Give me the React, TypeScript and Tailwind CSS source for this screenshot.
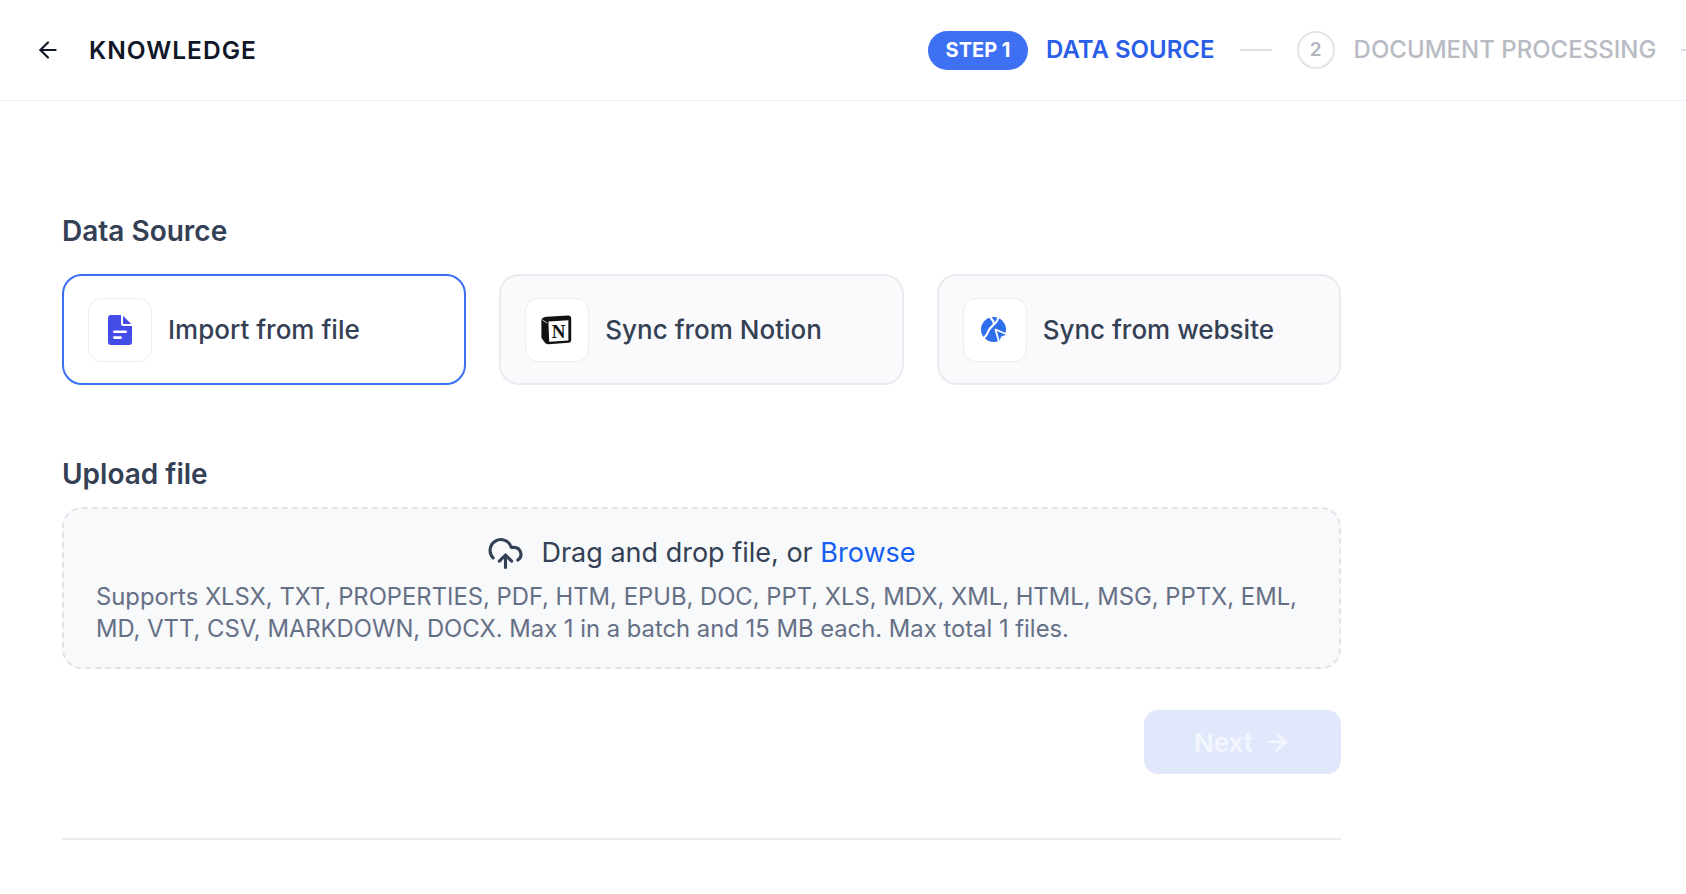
import React from "react";
import { ArrowLeft, ArrowRight, CloudUpload } from "lucide-react";

function FileIcon() {
  return (
    <svg width="24" height="30" viewBox="0 0 24 30" fill="none">
      <path
        d="M3 0 H13 V8.5 a2.5 2.5 0 0 0 2.5 2.5 H24 V27 a3 3 0 0 1 -3 3 H3 a3 3 0 0 1 -3 -3 V3 a3 3 0 0 1 3 -3 Z"
        fill="#444CE7"
      />
      <path d="M15 0.8 L23.2 9 H15 Z" fill="#444CE7" />
      <rect x="5" y="15.5" width="14" height="2.6" rx="1.3" fill="#fff" />
      <rect x="5" y="21.3" width="9" height="2.6" rx="1.3" fill="#fff" />
    </svg>
  );
}

function NotionIcon() {
  return (
    <svg width="32" height="30" viewBox="0 0 32 30" fill="none">
      <path
        d="M5.5 1.8 L27 0.4 C28.8 0.3 30.2 1.4 30.2 3.2 V25 C30.2 26.6 29.1 27.6 27.6 27.7 L7.2 29.2 C5.8 29.3 4.8 28.8 4 27.8 L1.2 24 C0.6 23.2 0.4 22.4 0.4 21.4 V5.8 C0.4 3.6 2 2 5.5 1.8 Z"
        fill="#111"
      />
      <path d="M7.4 6.6 L27.4 5.2 V25.4 L8.2 26.8 Z" fill="#fff" />
      <path d="M1.6 5 L6 8" stroke="#fff" strokeWidth="0.8" />
      <text
        x="17.6"
        y="23.4"
        textAnchor="middle"
        fontFamily="'Liberation Serif', serif"
        fontWeight="bold"
        fontSize="19"
        fill="#111"
      >
        N
      </text>
    </svg>
  );
}

function GlobeIcon() {
  return (
    <svg width="30" height="28" viewBox="0 0 30 28" fill="none">
      <circle cx="13.5" cy="13.5" r="12.5" fill="#2F6FEB" />
      <path
        d="M10.5 1.4 C11.8 4 15 5.2 13.6 8.4 C12.6 10.8 9.6 11.6 8.8 14.2 C8 16.8 6.2 19.6 4 22"
        stroke="#fff"
        strokeWidth="2.2"
        strokeLinecap="round"
      />
      <path d="M13.6 8.4 C15.6 7.8 17 5.2 18.4 1.8" stroke="#fff" strokeWidth="2" strokeLinecap="round" />
      <path
        d="M15.5 13.5 L28.5 19 L22 21 L19.5 27.5 Z"
        fill="#2F6FEB"
        stroke="#fff"
        strokeWidth="1.8"
        strokeLinejoin="round"
      />
    </svg>
  );
}

function SourceCard({
  icon,
  label,
  active,
}: {
  icon: React.ReactNode;
  label: string;
  active?: boolean;
}) {
  return (
    <div
      className={
        active
          ? "flex h-[111px] items-center gap-[16px] rounded-[20px] border-2 border-[#3D6FF3] bg-white px-[24px]"
          : "flex h-[111px] items-center gap-[16px] rounded-[20px] border-2 border-[#EAEBF0] bg-[#FAFAFC] px-[24px]"
      }
    >
      <div className="flex h-[64px] w-[64px] shrink-0 items-center justify-center rounded-[13px] border border-[#EDEDF0] bg-white">
        {icon}
      </div>
      <span className="text-[26px] font-medium leading-[32px] text-[#344054]">{label}</span>
    </div>
  );
}

export default function App() {
  return (
    <div
      className="min-h-[894px] w-full overflow-hidden bg-white"
      style={{ fontFamily: "Inter, 'Noto Sans', sans-serif" }}
    >
      {/* Header */}
      <header className="flex h-[101px] items-center overflow-hidden border-b border-[#F0F0F2]">
        <div className="flex w-[928px] shrink-0 items-center pl-[35px]">
          <ArrowLeft size={26} strokeWidth={2} className="text-[#101828]" />
          <span className="ml-[28px] text-[24.5px] font-semibold leading-[30px] tracking-[1px] text-[#101828]">
            KNOWLEDGE
          </span>
        </div>
        <div className="flex shrink-0 items-center">
          <div className="flex h-[39px] w-[100px] items-center justify-center rounded-full bg-[#3E70F4] text-[20px] font-bold text-white">
            STEP 1
          </div>
          <span className="ml-[18px] text-[24px] font-semibold text-[#2A5EE8]">DATA SOURCE</span>
          <div className="mx-[25px] h-[2px] w-[32px] bg-[#DCDEE3]" />
          <div className="flex h-[38px] w-[38px] items-center justify-center rounded-full border-2 border-[#E4E5E9] text-[19px] font-semibold text-[#B2B6BF]">
            2
          </div>
          <span className="ml-[19px] text-[24px] font-medium text-[#B8BBC3]">DOCUMENT PROCESSING</span>
          <div className="ml-[25px] h-[2px] w-[32px] bg-[#DCDEE3]" />
        </div>
      </header>

      {/* Content */}
      <main className="ml-[62px] w-[1279px] pt-[113px]">
        <h2 className="text-[28px] font-semibold leading-[34px] text-[#344054]">Data Source</h2>
        <div className="mt-[26px] grid grid-cols-3 gap-[33px]">
          <SourceCard icon={<FileIcon />} label="Import from file" active />
          <SourceCard icon={<NotionIcon />} label="Sync from Notion" />
          <SourceCard icon={<GlobeIcon />} label="Sync from website" />
        </div>

        <h2 className="mt-[72px] text-[28px] font-semibold leading-[34px] text-[#344054]">Upload file</h2>
        <div className="mt-[16px] rounded-[20px] border-2 border-dashed border-[#E1E3E8] bg-[#F8F9FB] px-[32px] pb-[22px] pt-[26px]">
          <div className="flex h-[36px] items-center justify-center gap-[17px]">
            <CloudUpload size={37} strokeWidth={2} className="text-[#344054]" />
            <span className="text-[27px] leading-[32px] text-[#344054]">
              Drag and drop file, or <span className="text-[#155EEF]">Browse</span>
            </span>
          </div>
          <p className="mt-[10px] whitespace-nowrap text-[23.8px] leading-[32px] text-[#667085]">
            Supports XLSX, TXT, PROPERTIES, PDF, HTM, EPUB, DOC, PPT, XLS, MDX, XML, HTML, MSG, PPTX, EML,
            <br />
            MD, VTT, CSV, MARKDOWN, DOCX. Max 1 in a batch and 15 MB each. Max total 1 files.
          </p>
        </div>

        <div className="mt-[41px] flex justify-end">
          <button className="flex h-[64px] w-[197px] items-center justify-center gap-[10px] rounded-[14px] bg-[#E1E8FB] text-[26px] font-semibold text-[#F3F6FE]">
            Next
            <ArrowRight size={28} strokeWidth={2.2} />
          </button>
        </div>

        <div className="mt-[64px] h-[2px] w-full bg-[#EBEBED]" />
      </main>
    </div>
  );
}
